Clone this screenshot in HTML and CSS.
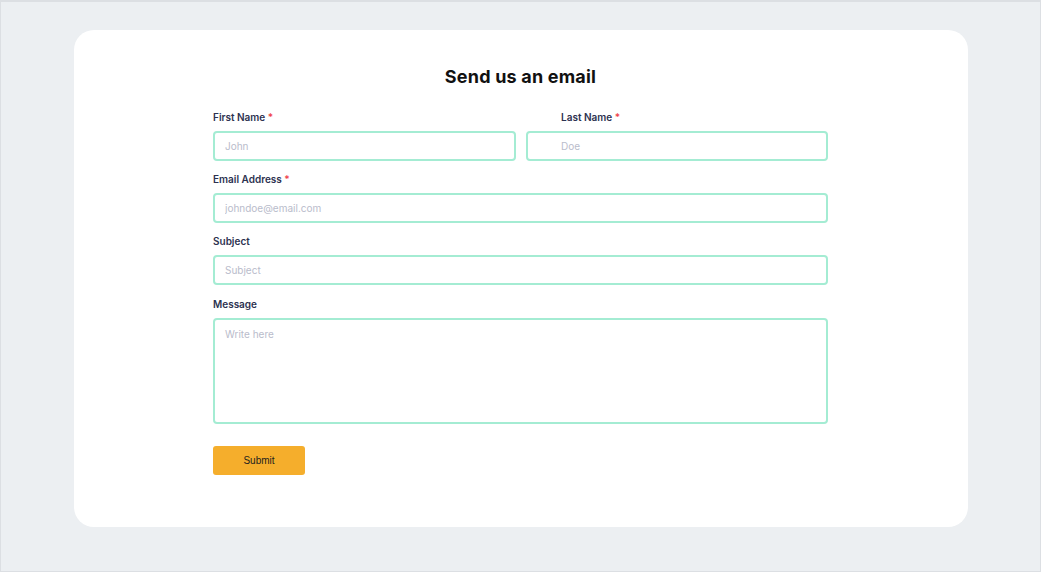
FILE: index.html
```html
<!DOCTYPE html>
<html lang="en">
<head>
<meta charset="utf-8">
<title>Send us an email</title>
<link rel="stylesheet" href="styles.css">
</head>
<body>
<div class="frame">
  <div class="card">
    <h1 class="title">Send us an email</h1>
    <form class="form">
      <div class="row">
        <div class="field">
          <label class="label">First Name <span class="req">*</span></label>
          <input class="input" type="text" placeholder="John">
        </div>
        <div class="field field-indent">
          <label class="label">Last Name <span class="req">*</span></label>
          <input class="input" type="text" placeholder="Doe">
        </div>
      </div>
      <div class="field">
        <label class="label">Email Address <span class="req">*</span></label>
        <input class="input" type="email" placeholder="johndoe@email.com">
      </div>
      <div class="field">
        <label class="label">Subject</label>
        <input class="input" type="text" placeholder="Subject">
      </div>
      <div class="field field-message">
        <label class="label">Message</label>
        <textarea class="input textarea" placeholder="Write here"></textarea>
      </div>
      <div class="actions">
        <button class="submit" type="button">Submit</button>
      </div>
    </form>
  </div>
</div>
</body>
</html>
```

FILE: styles.css
```css
* { box-sizing: border-box; }
html, body { margin: 0; padding: 0; }
body {
  font-family: "Inter", "Noto Sans", sans-serif;
  background: #eceff2;
}
.frame {
  width: 1041px;
  height: 572px;
  border: 1px solid #dcdfe3;
  border-top-width: 2px;
  background: #eceff2;
  padding-top: 28px;
}
.card {
  width: 894px;
  height: 497px;
  margin: 0 auto;
  background: #ffffff;
  border-radius: 20px;
  padding-top: 35px;
}
.title {
  margin: 0;
  text-align: center;
  font-size: 18px;
  line-height: 24px;
  font-weight: 700;
  color: #111111;
  letter-spacing: 0.2px;
}
.form {
  width: 615px;
  margin: 21px auto 0;
  display: flex;
  flex-direction: column;
  gap: 11px;
}
.row {
  display: grid;
  grid-template-columns: 303px 302px;
  column-gap: 10px;
}
.field {
  display: flex;
  flex-direction: column;
  gap: 7px;
}
.field-message { margin-top: 1px; }
.label {
  font-size: 10px;
  line-height: 14px;
  font-weight: 600;
  color: #2d3250;
}
.req { color: #f0444c; }
.input {
  height: 30px;
  width: 100%;
  border: 2px solid #a4ecd3;
  border-radius: 4px;
  padding: 0 10px;
  font-family: "Inter", "Noto Sans", sans-serif;
  font-size: 10px;
  color: #333;
  background: #fff;
  outline: none;
}
.input::placeholder { color: #b9bccb; }
.field-indent .label { padding-left: 35px; }
.field-indent .input { padding-left: 33px; }
.textarea {
  height: 106px;
  padding-top: 8px;
  resize: none;
  display: block;
}
.actions { margin-top: 11px; }
.submit {
  width: 92px;
  height: 29px;
  border: none;
  border-radius: 3px;
  background: #f5ae2c;
  color: #1e1e1e;
  font-family: "Liberation Sans", Arial, sans-serif;
  font-size: 10px;
  cursor: pointer;
}
```
